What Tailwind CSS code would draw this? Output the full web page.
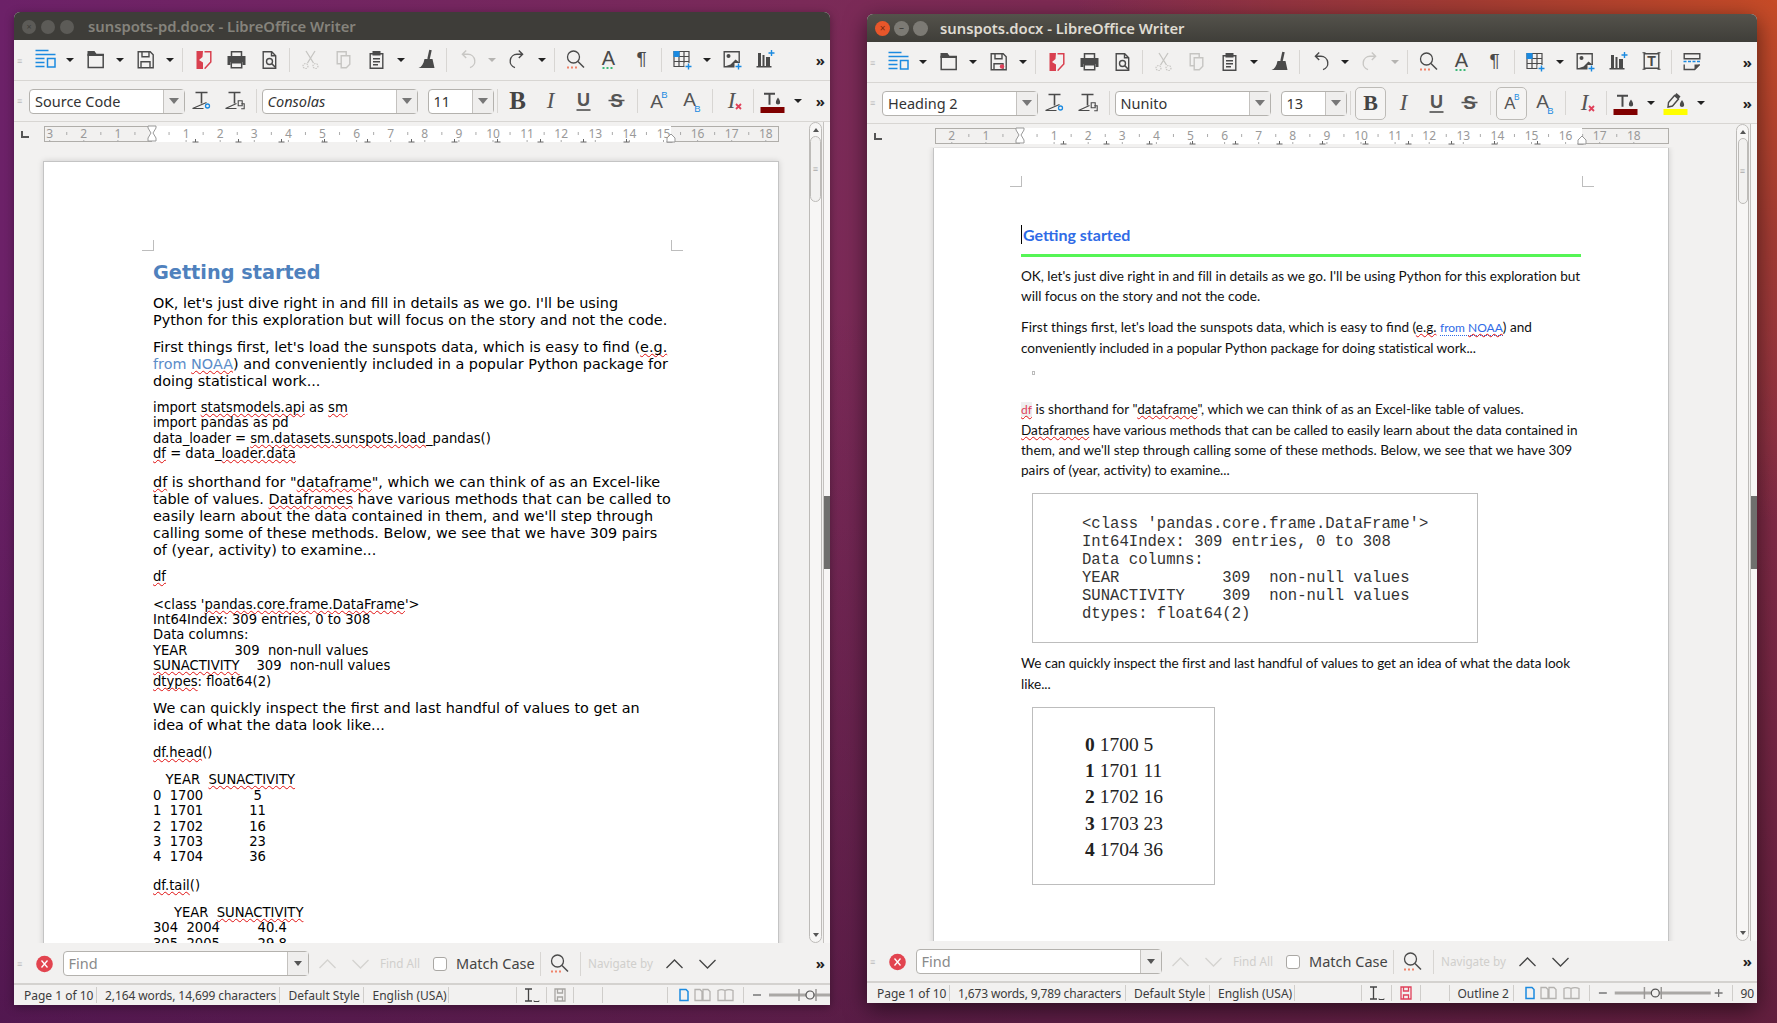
<!DOCTYPE html>
<html lang="en">
<head>
<meta charset="UTF-8" />
<title>LibreOffice Writer</title>
<script src="https://cdn.jsdelivr.net/npm/@tailwindcss/browser@4"></script>
</head>
<body class="w-[1777px] h-[1023px] overflow-hidden relative bg-[radial-gradient(ellipse_700px_520px_at_100%_0%,#c64b27_0%,#a23b33_45%,transparent_100%),linear-gradient(180deg,transparent_30%,rgba(50,12,50,0.45)_100%),linear-gradient(90deg,#6c2168_0%,#7a2a58_45%,#8a2e48_100%)] [font-family:'Noto_Sans',sans-serif]">

<svg class="hidden">
  <symbol id="sidebar" viewBox="-6.5 -3 33 26"><path d="M0 .5h13M0 4.500h20M0 8.500h9M0 12.500h9M0 16.500h9" fill="none" stroke="#1b8ae0" stroke-width="1.4"/><rect x="12" y="8.500" width="7.500" height="8.500" fill="none" stroke="#1b8ae0" stroke-width="1.5"/></symbol>
  <symbol id="folder" viewBox="-6.5 -3 33 26"><path d="M2.700 4.500h15v13h-15z" fill="none" stroke="#4a4a4a" stroke-width="1.5"/><path d="M2 1h7l2 3h7.500v2H2z" fill="#4a4a4a"/></symbol>
  <symbol id="save" viewBox="-6.5 -3 33 26"><path d="M2.700 1.700h12l3 3v13h-15zM6.500 1.700v5h7v-5M5.500 17.700v-6h9v6" fill="none" stroke="#4a4a4a" stroke-width="1.4"/></symbol>
  <symbol id="savemod" viewBox="-6.5 -3 33 26"><path d="M2.700 1.700h12l3 3v13h-15zM6.500 1.700v5h7v-5M5.500 17.700v-6h9v6" fill="none" stroke="#4a4a4a" stroke-width="1.4"/><circle cx="13.500" cy="14.500" r="2.200" fill="#e0405a"/></symbol>
  <symbol id="pdf" viewBox="-6.5 -3 33 26"><path d="M3 1h6.500L9 7l-3.500 3 4 2.500V19H3z" fill="#d9404f"/><path d="M11 1.700h6.300V12L11.500 18.300H11" fill="none" stroke="#d9404f" stroke-width="1.5"/></symbol>
  <symbol id="print" viewBox="-6.5 -3 33 26"><path d="M5 6V1.700h10V6" fill="none" stroke="#4a4a4a" stroke-width="1.5"/><path d="M1 6h18v9h-3v-3H4v3H1z" fill="#4a4a4a"/><path d="M4.800 12.700h10.400v5H4.800z" fill="none" stroke="#4a4a4a" stroke-width="1.5"/></symbol>
  <symbol id="preview" viewBox="-6.5 -3 33 26"><path d="M3.700 1.700h8.500l4 4v12.600H3.700zM12 1.700v4h4.200" fill="none" stroke="#4a4a4a" stroke-width="1.4"/><circle cx="10" cy="11.500" r="3" fill="none" stroke="#4a4a4a" stroke-width="1.4"/><path d="M12.300 13.800l3.500 3.500" stroke="#4a4a4a" stroke-width="1.600"/></symbol>
  <symbol id="cut" viewBox="-6.5 -3 33 26"><path d="M5.500 1l7.500 12M14.500 1L7 13" fill="none" stroke="#c6c5c2" stroke-width="1.3"/><circle cx="5" cy="16" r="2.500" fill="none" stroke="#c6c5c2" stroke-width="1.2" stroke-dasharray="1.500 1"/><circle cx="15" cy="16" r="2.500" fill="none" stroke="#c6c5c2" stroke-width="1.2" stroke-dasharray="1.500 1"/></symbol>
  <symbol id="copy" viewBox="-6.5 -3 33 26"><path d="M3.700 1.700h9v12h-9z" fill="none" stroke="#c6c5c2" stroke-width="1.4"/><path d="M7.700 5.700h8.600v8.500l-3.500 3.500H7.700z" fill="#f2f1f0" stroke="#c6c5c2" stroke-width="1.4"/></symbol>
  <symbol id="paste" viewBox="-6.5 -3 33 26"><path d="M3.700 3.700h12.600v14.600H3.700zM6.500 8.700h7M6.500 11.700h7M6.500 14.700h5" fill="none" stroke="#4a4a4a" stroke-width="1.400"/><rect x="6" y="1" width="8" height="4.500" fill="#4a4a4a"/></symbol>
  <symbol id="brush" viewBox="-6.5 -3 33 26"><path d="M14 0l-2 9" stroke="#4a4a4a" stroke-width="2.500"/><path d="M8 9h8l2 9H2c3-1 5-4 6-9z" fill="#4a4a4a"/></symbol>
  <symbol id="redo" viewBox="-6.5 -3 33 26"><path d="M14.500 4.300H9.500a6.800 6.800 0 0 0-2 13.300M11.300 .5l3.800 3.800-3.800 3.800" fill="none" stroke="currentColor" stroke-width="1.400"/></symbol>
  <symbol id="undo" viewBox="-6.5 -3 33 26"><path d="M5.500 4.300h5a6.800 6.800 0 0 1 2 13.300M8.700 .5L4.900 4.300l3.800 3.800" fill="none" stroke="currentColor" stroke-width="1.400"/></symbol>
  <symbol id="find" viewBox="-6.5 -3 33 26"><circle cx="8" cy="7" r="6" fill="none" stroke="#4a4a4a" stroke-width="1.300"/><path d="M12.500 11.500l6 6" stroke="#4a4a4a" stroke-width="1.500"/><path d="M1.500 17.500h10" stroke="#f0846a" stroke-width="2" stroke-dasharray="2 2"/></symbol>
  <symbol id="fmt" viewBox="-6.5 -3 33 26"><text x="10" y="14.500" text-anchor="middle" font-family="Liberation Sans" font-size="20" fill="#4a4a4a">A</text><path d="M4 18h12" stroke="#3cb878" stroke-width="2" stroke-dasharray="2 2"/></symbol>
  <symbol id="para" viewBox="-6.5 -3 33 26"><text x="10" y="15" text-anchor="middle" font-family="Liberation Sans" font-size="19" fill="#4a4a4a">¶</text></symbol>
  <symbol id="table" viewBox="-6.5 -3 33 26"><path d="M1.500 1.500h15v15h-15zM1.500 6.500h15M1.500 11.500h15M6.500 1.500v15M11.500 1.500v15" fill="none" stroke="#4a4a4a" stroke-width="1.200"/><rect x="1" y="1" width="6" height="6" fill="#1b8ae0"/><rect x="12" y="13" width="8" height="7" fill="#f2f1f0"/><path d="M16 13.500v6M13 16.500h6" stroke="#1b8ae0" stroke-width="1.400"/></symbol>
  <symbol id="image" viewBox="-6.5 -3 33 26"><path d="M1.700 1.700h15v15h-15z" fill="none" stroke="#4a4a4a" stroke-width="1.400"/><circle cx="6" cy="6" r="2" fill="#4a4a4a"/><path d="M2 16.500l6-2 5-5 4 3v4.500z" fill="#4a4a4a"/><rect x="12" y="13" width="8" height="7" fill="#f2f1f0"/><path d="M16 13.500v6M13 16.500h6" stroke="#1b8ae0" stroke-width="1.400"/></symbol>
  <symbol id="chart" viewBox="-6.5 -3 33 26"><path d="M1 16.700h15" stroke="#4a4a4a" stroke-width="1.400"/><rect x="2.500" y="3" width="3" height="13" fill="#4a4a4a"/><rect x="7" y="5" width="2" height="11" fill="#4a4a4a"/><rect x="10.500" y="7" width="4" height="9" fill="#4a4a4a"/><path d="M16 0v6M13 3h6" stroke="#1b8ae0" stroke-width="1.400"/></symbol>
  <symbol id="textbox" viewBox="-6.5 -3 33 26"><path d="M2.700 1.700h14.600v14.600H2.700z" fill="none" stroke="#4a4a4a" stroke-width="1.400"/><path d="M1 .7h3M16 .7h3M1 17.300h3M16 17.300h3" stroke="#4a4a4a"/><text x="10" y="14" text-anchor="middle" font-family="Liberation Sans" font-weight="700" font-size="14" fill="#4a4a4a">T</text></symbol>
  <symbol id="header" viewBox="-6.5 -3 33 26"><path d="M1.700 1.700h15.600v5H1.700zM1.700 12.500v5h10.500l5-5" fill="none" stroke="#4a4a4a" stroke-width="1.400"/><path d="M1 9.500h17" stroke="#1b8ae0" stroke-width="1.400" stroke-dasharray="3 1.500"/><path d="M12 17.500v-5h5z" fill="#4a4a4a"/></symbol>
  <symbol id="cs1" viewBox="-6.5 -3 33 26"><path d="M3 1.500h12M9 1.500v11" stroke="#4a4a4a" stroke-width="1.600"/><path d="M0 17.500h11M0 17.500l14-6" stroke="#4a4a4a" stroke-width="1.200" fill="none"/><circle cx="15" cy="15" r="2" fill="none" stroke="#1b8ae0" stroke-width="1.300"/></symbol>
  <symbol id="cs2" viewBox="-6.5 -3 33 26"><path d="M3 1.500h12M9 1.500v11" stroke="#4a4a4a" stroke-width="1.600"/><path d="M0 17.500h11M0 17.500l11-5" stroke="#4a4a4a" stroke-width="1.200" fill="none"/><path d="M12.700 9.700h4v5h-4zM15.700 12.700h3v5h-3" fill="#f2f1f0" stroke="#4a4a4a" stroke-width="1.100"/></symbol>
  <symbol id="bold" viewBox="-6.5 -3 33 26"><text x="10" y="18" text-anchor="middle" font-family="Liberation Serif" font-weight="700" font-size="25" fill="#444">B</text></symbol>
  <symbol id="ital" viewBox="-6.5 -3 33 26"><text x="10" y="17" text-anchor="middle" font-family="Liberation Serif" font-style="italic" font-size="23" fill="#555">I</text></symbol>
  <symbol id="under" viewBox="-6.5 -3 33 26"><text x="10" y="15" text-anchor="middle" font-family="Liberation Sans" font-weight="700" font-size="18" fill="#555">U</text><path d="M3 19h14" stroke="#444" stroke-width="1.300"/></symbol>
  <symbol id="strike" viewBox="-6.5 -3 33 26"><text x="10" y="16" text-anchor="middle" font-family="Liberation Sans" font-weight="700" font-size="19" fill="#555">S</text><path d="M2 9.500h16" stroke="#555" stroke-width="1.300"/></symbol>
  <symbol id="sup" viewBox="-6.5 -3 33 26"><text x="8" y="17" text-anchor="middle" font-family="Liberation Sans" font-size="19" fill="#555">A</text><text x="16" y="7" text-anchor="middle" font-family="Liberation Sans" font-size="9.500" fill="#1b8ae0">B</text></symbol>
  <symbol id="sub" viewBox="-6.5 -3 33 26"><text x="8" y="15" text-anchor="middle" font-family="Liberation Sans" font-size="19" fill="#555">A</text><text x="16" y="21" text-anchor="middle" font-family="Liberation Sans" font-size="9.500" fill="#1b8ae0">B</text></symbol>
  <symbol id="clear" viewBox="-6.5 -3 33 26"><text x="8" y="17" text-anchor="middle" font-family="Liberation Serif" font-style="italic" font-size="23" fill="#555">I</text><path d="M12.500 13l5 5M17.500 13l-5 5" stroke="#e0405a" stroke-width="1.800"/></symbol>
  <symbol id="fcolor" viewBox="-6.5 -3 33 26"><path d="M1.500 2.700h11M7 2.700v11" stroke="#4a4a4a" stroke-width="2"/><path d="M15.500 6.500c-3 4-2.700 7 0 7s3-3 0-7z" fill="#4a4a4a"/><rect x="-2" y="16" width="24" height="6" fill="#800000"/></symbol>
  <symbol id="hilite" viewBox="-6.5 -3 33 26"><path d="M3 9.500l6-7 4 3.500-6 7-4.500 1z" fill="none" stroke="#4a4a4a" stroke-width="1.400"/><path d="M9 2.500l4 3.500 2-2.500-4-3.500z" fill="#4a4a4a"/><path d="M16.500 7c-3 4-2.700 7 0 7s3-3 0-7z" fill="#4a4a4a"/><rect x="-2" y="16" width="24" height="6" fill="#ffff00"/></symbol>
  <symbol id="close" viewBox="-6.5 -3 33 26"><circle cx="10" cy="10" r="8.300" fill="#e2444f"/><path d="M7 6.500l6 7M13 6.500l-6 7" stroke="#fff" stroke-width="1.300"/></symbol>
  <symbol id="up" viewBox="-6.5 -3 33 26"><path d="M2 14l8-8 8 8" fill="none" stroke="currentColor" stroke-width="1.300"/></symbol>
  <symbol id="down" viewBox="-6.5 -3 33 26"><path d="M2 6l8 8 8-8" fill="none" stroke="currentColor" stroke-width="1.300"/></symbol>
  <symbol id="cursor" viewBox="0 0 24 16"><path d="M5 2h7M8.500 2v12M5 14h7" fill="none" stroke="#444" stroke-width="1.300"/><path d="M14 13.500v1h5v-1" fill="none" stroke="#444"/></symbol>
  <symbol id="floppy" viewBox="0 0 16 16"><path d="M3 2h10v12H3zM5.500 2v4h5V2M5.500 14v-4h5v4" fill="none" stroke="currentColor" stroke-width="1.300"/></symbol>
  <symbol id="pages" viewBox="0 0 66 16"><path d="M7 2.500h6l2 2v9H7z" fill="none" stroke="#1b8ae0" stroke-width="1.500"/><path d="M22 2.500h5l2 2v9h-7zM30 2.500h5l2 2v9h-7z" fill="none" stroke="#b4b2af" stroke-width="1.300"/><path d="M45 3.500c2-1 5-1 7 0 2-1 6-1 8 0v10H45zM52 3.500v10" fill="none" stroke="#b4b2af" stroke-width="1.300"/></symbol>
  <symbol id="zoom" viewBox="0 0 143 16"><path d="M9 8h8M126 8h8M130 4v8" fill="none" stroke="#777" stroke-width="1.300"/><path d="M25 8h97" stroke="#aaa8a5" stroke-width="3"/><path d="M55 2v12M72 2v12" stroke="#9a9896" stroke-width="1.500"/><circle cx="66" cy="8" r="4" fill="#f2f1f0" stroke="#555" stroke-width="1.200"/></symbol>
</svg>

<!-- left window -->
<div class="absolute left-[14px] top-[12px] w-[816px] h-[993px] flex flex-col rounded-t-[6px] overflow-hidden bg-[#f2f1f0] shadow-[0_2px_10px_rgba(0,0,0,0.35)]">
  <div class="h-[28px] shrink-0 flex items-center bg-[#3e3d39] pl-[8px] pt-px">
    <span class="w-[14px] h-[14px] rounded-full bg-[#5c5b57] text-[9px] leading-[14px] text-center text-[#3e3d39]">×</span>
    <span class="w-[14px] h-[14px] ml-[5px] rounded-full bg-[#5c5b57]"></span>
    <span class="w-[14px] h-[14px] ml-[5px] rounded-full bg-[#5c5b57]"></span>
    <span class="ml-[14px] text-[14.800px] font-semibold text-[#85837c] whitespace-nowrap">sunspots-pd.docx - LibreOffice Writer</span>
  </div>
  <div class="h-[41px] shrink-0 flex items-center border-b border-[#d8d6d3] text-[#4a4a4a] [&>svg]:w-[33px] [&>svg]:h-[26px] [&>svg]:shrink-0 [&>i]:mx-[4.500px] [&>i]:border-x-[4px] [&>i]:border-x-transparent [&>i]:border-t-[4px] [&>i]:border-t-[#222] [&>b]:w-px [&>b]:h-[24px] [&>b]:mx-[3.500px] [&>b]:bg-[#d8d6d3]">
    <span class="w-[14.500px] pl-[3px] text-[#bbb] text-[9px] leading-[5px]">≡</span>
    <svg><use href="#sidebar"/></svg><i></i><svg><use href="#folder"/></svg><i></i><svg><use href="#save"/></svg><i></i><b></b>
    <svg><use href="#pdf"/></svg><svg><use href="#print"/></svg><svg><use href="#preview"/></svg><b></b>
    <svg><use href="#cut"/></svg><svg><use href="#copy"/></svg><svg><use href="#paste"/></svg><i></i><svg><use href="#brush"/></svg><b></b>
    <svg class="text-[#c8c7c4]"><use href="#undo"/></svg><i class="border-t-[#b5b4b1]!"></i><svg><use href="#redo"/></svg><i></i><b></b>
    <svg><use href="#find"/></svg><svg><use href="#fmt"/></svg><svg><use href="#para"/></svg><b></b>
    <svg><use href="#table"/></svg><i></i><svg><use href="#image"/></svg><svg><use href="#chart"/></svg>
    <span class="ml-auto mr-[5px] text-[15px] font-bold text-[#222]">»</span>
  </div>
  <div class="h-[41px] shrink-0 flex items-center border-b border-[#d8d6d3] text-[#4a4a4a] [&>svg]:w-[33px] [&>svg]:h-[26px] [&>svg]:shrink-0 [&>i]:mx-[4.500px] [&>i]:border-x-[4px] [&>i]:border-x-transparent [&>i]:border-t-[4px] [&>i]:border-t-[#222] [&>b]:w-px [&>b]:h-[24px] [&>b]:mx-[3.500px] [&>b]:bg-[#d8d6d3]">
    <span class="w-[15px] pl-[3px] text-[#bbb] text-[9px]">≡</span>
    <div class="w-[156px] h-[25px] shrink-0 flex rounded-[4px] border border-[#b4b2ae] bg-white text-[14.500px] leading-[23px] text-[#333]"><span class="flex-1 pl-[5px]">Source Code</span><span class="w-[21px] border-l border-[#c4c2bf] bg-[#efeeed] flex items-center justify-center"><span class="border-x-[5px] border-x-transparent border-t-[6px] border-t-[#777]"></span></span></div>
    <span class="w-[1px]"></span>
    <svg><use href="#cs1"/></svg><svg><use href="#cs2"/></svg><b></b>
    <div class="ml-[1.500px] w-[156px] h-[25px] shrink-0 flex rounded-[4px] border border-[#b4b2ae] bg-white text-[14.500px] leading-[23px] text-[#333] italic"><span class="flex-1 pl-[5px]">Consolas</span><span class="w-[21px] border-l border-[#c4c2bf] bg-[#efeeed] flex items-center justify-center"><span class="border-x-[5px] border-x-transparent border-t-[6px] border-t-[#777]"></span></span></div>
    <div class="ml-[10px] w-[66px] h-[25px] shrink-0 flex rounded-[4px] border border-[#b4b2ae] bg-white text-[14.500px] leading-[23px] text-[#333]"><span class="flex-1 pl-[5px]">11</span><span class="w-[21px] border-l border-[#c4c2bf] bg-[#efeeed] flex items-center justify-center"><span class="border-x-[5px] border-x-transparent border-t-[6px] border-t-[#777]"></span></span></div>
    <b class="ml-[3.500px]! mr-[3px]!"></b>
    <svg><use href="#bold"/></svg><svg><use href="#ital"/></svg><svg><use href="#under"/></svg><svg><use href="#strike"/></svg><b class="mx-[4px]!"></b>
    <svg><use href="#sup"/></svg><svg><use href="#sub"/></svg><b class="mx-[4px]!"></b>
    <svg><use href="#clear"/></svg><b class="mx-[2.500px]!"></b>
    <svg><use href="#fcolor"/></svg><i></i>
    <span class="ml-auto mr-[5px] text-[15px] font-bold text-[#222]">»</span>
  </div>
  <div class="flex-1 min-h-0 flex">
    <div class="flex-1 min-w-0 flex flex-col">
      <svg id="rulerL" class="h-[23px] w-full shrink-0"></svg>
      <div class="flex-1 min-h-0 overflow-hidden pt-[16px] pl-[29px]">
        <div class="relative w-[736px] h-[900px] bg-white border border-[#c4c4c4] shadow-[0_0_6px_rgba(0,0,0,0.15)] pl-[109px] pt-[98px] text-black [font-family:'DejaVu_Sans',sans-serif] text-[14.400px] leading-[17px] whitespace-nowrap [&_u]:decoration-wavy [&_u]:decoration-[#e01010] [&_u]:decoration-1 [&_u]:underline-offset-[1px] [&_u]:[text-decoration-skip-ink:none] [&>p]:mt-[10px] [&>pre]:mt-[10.500px] [&>pre+p]:mt-[13px] [&>pre]:[font-family:'DejaVu_Sans',sans-serif] [&>pre]:text-[13.170px] [&>pre]:leading-[15.400px]">
          <span class="absolute left-[98px] top-[78px] w-[12px] h-[11px] border-r border-b border-[#bdbdbd]"></span>
          <span class="absolute left-[627px] top-[78px] w-[12px] h-[11px] border-l border-b border-[#bdbdbd]"></span>
          <h2 class="text-[19.300px] leading-[26px] font-bold text-[#4f81bd]">Getting started</h2>
          <p class="mt-[8.500px]!">OK, let's just dive right in and fill in details as we go. I'll be using<br>Python for this exploration but will focus on the story and not the code.</p>
          <p>First things first, let's load the sunspots data, which is easy to find (<u>e.g.</u><br><span class="text-[#5b8cc8]">from <u>NOAA</u></span>) and conveniently included in a popular Python package for<br>doing statistical work...</p>
          <pre>import <u>statsmodels.api</u> as <u>sm</u>
import pandas as pd
data_loader = <u>sm.datasets.sunspots.load</u>_pandas()
<u>df</u> = data_<u>loader.data</u></pre>
          <p class="mt-[12.500px]!"><u>df</u> is shorthand for "<u>dataframe</u>", which we can think of as an Excel-like<br>table of values. <u>Dataframes</u> have various methods that can be called to<br>easily learn about the data contained in them, and we'll step through<br>calling some of these methods. Below, we see that we have 309 pairs<br>of (year, activity) to examine...</p>
          <pre class="mt-[9.500px]!"><u>df</u></pre>
          <pre class="mt-[12.500px]!">&lt;class '<u>pandas.core.frame.DataFrame</u>'&gt;
Int64Index: 309 entries, 0 to 308
Data columns:
YEAR           <span class="ml-[1px]">309</span>  non-null values
<u>SUNACTIVITY</u>    309  non-null values
<u>dtypes</u>: float64(2)</pre>
          <p class="mt-[11px]!">We can quickly inspect the first and last handful of values to get an<br>idea of what the data look like...</p>
          <pre class="mt-[11.500px]!"><u>df.head</u>()</pre>
          <pre class="mt-[11.500px]!">   YEAR  <u>SUNACTIVITY</u>
0  1700            5
1  1701           11
2  1702           16
3  1703           23
4  1704           36</pre>
          <pre class="mt-[13px]!"><u>df.tail</u>()</pre>
          <pre class="mt-[11.500px]!">     YEAR  <u>SUNACTIVITY</u>
304  2004         40.4
305  2005         29.8</pre>
        </div>
      </div>
    </div>
    <div class="w-[15px] shrink-0 pl-px pr-px"><div class="h-full rounded-full border border-[#bdbbb8] bg-[#f7f6f5] flex flex-col items-center pt-[5px] pb-[5px]"><span class="border-x-[3px] border-x-transparent border-b-[4px] border-b-[#555]"></span><span class="mt-[4px] w-[11px] h-[66px] rounded-full border border-[#bdbbb8] bg-[#f2f1f0] flex items-center justify-center text-[#aaa] text-[9px]">≡</span><span class="mt-auto border-x-[3px] border-x-transparent border-t-[4px] border-t-[#555]"></span></div></div>
    <div class="w-[7px] shrink-0 border-l border-[#c4c2bf] bg-[#f7f6f5] flex items-center"><span class="w-full h-[73px] bg-[#6f6f6d]"></span></div>
  </div>
  <div class="h-[40px] shrink-0 flex items-center border-t border-[#f2f1f0] text-[14.500px] text-[#555] [&>svg]:w-[33px] [&>svg]:h-[26px] [&>svg]:shrink-0">
    <span class="w-[13.500px] pl-[3px] text-[#bbb] text-[9px]">≡</span>
    <svg><use href="#close"/></svg>
    <div class="ml-[2px] w-[246.500px] h-[25px] shrink-0 flex rounded-[4px] border border-[#b4b2ae] bg-white leading-[23px] text-[#8a8a8a]"><span class="flex-1 pl-[5px]">Find</span><span class="w-[21px] border-l border-[#c4c2bf] bg-[#efeeed] flex items-center justify-center"><span class="border-x-[4px] border-x-transparent border-t-[5px] border-t-[#555]"></span></span></div>
    <svg class="ml-[1.500px] text-[#d4d3d0]"><use href="#up"/></svg><svg class="text-[#d4d3d0]"><use href="#down"/></svg>
    <span class="w-[41px] ml-[3.500px] text-[11.700px] text-[#d0cfcc] whitespace-nowrap">Find All</span>
    <span class="ml-[12px] w-[14px] h-[14px] shrink-0 rounded-[3px] border border-[#aaa8a4] bg-white"></span>
    <span class="ml-[9px] w-[77px] text-[#444] whitespace-nowrap">Match Case</span>
    <span class="ml-[7px] w-px h-[24px] bg-[#d8d6d3]"></span>
    <svg class="ml-[2px]"><use href="#find"/></svg>
    <span class="ml-[4px] w-px h-[24px] bg-[#d8d6d3]"></span>
    <span class="ml-[7px] w-[62px] text-[11.700px] text-[#d0cfcc] whitespace-nowrap">Navigate by</span>
    <svg class="ml-[7.500px] text-[#444]"><use href="#up"/></svg><svg class="text-[#444]"><use href="#down"/></svg>
    <span class="ml-auto mr-[5px] text-[15px] font-bold text-[#222]">»</span>
  </div>
  <div class="h-[22px] shrink-0 flex items-center border-t-2 border-[#d4d2cf] overflow-hidden text-[12px] text-[#3c3c3c] [&>span]:h-[16px] [&>span]:shrink-0 [&>span]:flex [&>span]:items-center [&>span]:whitespace-nowrap [&>span]:border-r [&>span]:border-[#cfcdca]">
    <span class="w-[82.500px] pl-[10px] pt-px">Page 1 of 10</span>
    <span class="w-[183.500px] pl-[8.500px] pt-px tracking-[-0.1px]">2,164 words, 14,699 characters</span>
    <span class="w-[84px] pl-[8.500px] pt-px">Default Style</span>
    <span class="w-[85px] pl-[8.500px] pt-px">English (USA)</span>
    <span class="w-[68px]"></span>
    <span class="w-[30px] justify-center"><svg class="w-[24px] h-[16px]"><use href="#cursor"/></svg></span>
    <span class="w-[27px] justify-center text-[#a8a6a3]"><svg class="w-[16px] h-[16px]"><use href="#floppy"/></svg></span>
    <span class="w-[29px]"></span>
    <span class="w-[64.500px]"></span>
    <span class="w-[76.500px] pl-[5px]"><svg class="w-[66px] h-[16px]"><use href="#pages"/></svg></span>
    <span class="w-[143px] border-r-0!"><svg class="w-[143px] h-[16px]"><use href="#zoom"/></svg></span>
  </div>
</div>

<!-- right window -->
<div class="absolute left-[867px] top-[14px] w-[890px] h-[989px] flex flex-col rounded-t-[6px] overflow-hidden bg-[#f2f1f0] shadow-[0_6px_22px_rgba(0,0,0,0.55)]">
  <div class="h-[28px] shrink-0 flex items-center bg-[linear-gradient(180deg,#54524b,#3f3e39)] pl-[8px] pt-px">
    <span class="w-[15px] h-[15px] rounded-full bg-[#e8562a] text-[10px] leading-[15px] text-center text-[#7a2a10]">×</span>
    <span class="w-[15px] h-[15px] ml-[4px] rounded-full bg-[#7c7a74] text-[10px] leading-[13px] text-center text-[#3e3d39]">–</span>
    <span class="w-[15px] h-[15px] ml-[4px] rounded-full bg-[#7c7a74]"></span>
    <span class="ml-[12px] text-[14.800px] font-semibold text-[#dfdbd2] whitespace-nowrap">sunspots.docx - LibreOffice Writer</span>
  </div>
  <div class="h-[41px] shrink-0 flex items-center border-b border-[#d8d6d3] text-[#4a4a4a] [&>svg]:w-[33px] [&>svg]:h-[26px] [&>svg]:shrink-0 [&>i]:mx-[4.500px] [&>i]:border-x-[4px] [&>i]:border-x-transparent [&>i]:border-t-[4px] [&>i]:border-t-[#222] [&>b]:w-px [&>b]:h-[24px] [&>b]:mx-[3.500px] [&>b]:bg-[#d8d6d3]">
    <span class="w-[14.500px] pl-[3px] text-[#bbb] text-[9px] leading-[5px]">≡</span>
    <svg><use href="#sidebar"/></svg><i></i><svg><use href="#folder"/></svg><i></i><svg><use href="#savemod"/></svg><i></i><b></b>
    <svg><use href="#pdf"/></svg><svg><use href="#print"/></svg><svg><use href="#preview"/></svg><b></b>
    <svg><use href="#cut"/></svg><svg><use href="#copy"/></svg><svg><use href="#paste"/></svg><i></i><svg><use href="#brush"/></svg><b></b>
    <svg><use href="#undo"/></svg><i></i><svg class="text-[#c8c7c4]"><use href="#redo"/></svg><i class="border-t-[#b5b4b1]!"></i><b></b>
    <svg><use href="#find"/></svg><svg><use href="#fmt"/></svg><svg><use href="#para"/></svg><b></b>
    <svg><use href="#table"/></svg><i></i><svg><use href="#image"/></svg><svg><use href="#chart"/></svg><svg><use href="#textbox"/></svg><b></b>
    <svg><use href="#header"/></svg>
    <span class="ml-auto mr-[5px] text-[15px] font-bold text-[#222]">»</span>
  </div>
  <div class="h-[41px] shrink-0 flex items-center border-b border-[#d8d6d3] text-[#4a4a4a] [&>svg]:w-[33px] [&>svg]:h-[26px] [&>svg]:shrink-0 [&>i]:mx-[4.500px] [&>i]:border-x-[4px] [&>i]:border-x-transparent [&>i]:border-t-[4px] [&>i]:border-t-[#222] [&>b]:w-px [&>b]:h-[24px] [&>b]:mx-[3.500px] [&>b]:bg-[#d8d6d3]">
    <span class="w-[15px] pl-[3px] text-[#bbb] text-[9px]">≡</span>
    <div class="w-[156px] h-[25px] shrink-0 flex rounded-[4px] border border-[#b4b2ae] bg-white text-[14.500px] leading-[23px] text-[#333]"><span class="flex-1 pl-[5px]">Heading 2</span><span class="w-[21px] border-l border-[#c4c2bf] bg-[#efeeed] flex items-center justify-center"><span class="border-x-[5px] border-x-transparent border-t-[6px] border-t-[#777]"></span></span></div>
    <span class="w-[1px]"></span>
    <svg><use href="#cs1"/></svg><svg><use href="#cs2"/></svg><b></b>
    <div class="ml-[1.500px] w-[156px] h-[25px] shrink-0 flex rounded-[4px] border border-[#b4b2ae] bg-white text-[14.500px] leading-[23px] text-[#333]"><span class="flex-1 pl-[5px]">Nunito</span><span class="w-[21px] border-l border-[#c4c2bf] bg-[#efeeed] flex items-center justify-center"><span class="border-x-[5px] border-x-transparent border-t-[6px] border-t-[#777]"></span></span></div>
    <div class="ml-[10px] w-[66px] h-[25px] shrink-0 flex rounded-[4px] border border-[#b4b2ae] bg-white text-[14.500px] leading-[23px] text-[#333]"><span class="flex-1 pl-[5px]">13</span><span class="w-[21px] border-l border-[#c4c2bf] bg-[#efeeed] flex items-center justify-center"><span class="border-x-[5px] border-x-transparent border-t-[6px] border-t-[#777]"></span></span></div>
    <b class="ml-[3.500px]! mr-[3px]!"></b>
    <span class="w-[31px] h-[33px] mx-px shrink-0 rounded-[5px] border border-[#bdbbb7] bg-[#f5f4f3] flex items-center justify-center overflow-hidden"><svg class="w-[29px] h-[26px] shrink-0"><use href="#bold"/></svg></span>
    <svg><use href="#ital"/></svg><svg><use href="#under"/></svg><svg><use href="#strike"/></svg><b class="mx-[4px]!"></b>
    <span class="w-[31px] h-[33px] mx-px shrink-0 rounded-[5px] border border-[#bdbbb7] bg-[#f5f4f3] flex items-center justify-center overflow-hidden"><svg class="w-[29px] h-[26px] shrink-0"><use href="#sup"/></svg></span>
    <svg><use href="#sub"/></svg><b class="mx-[4px]!"></b>
    <svg><use href="#clear"/></svg><b class="mx-[2.500px]!"></b>
    <svg><use href="#fcolor"/></svg><i></i><svg><use href="#hilite"/></svg><i></i>
    <span class="ml-auto mr-[5px] text-[15px] font-bold text-[#222]">»</span>
  </div>
  <div class="flex-1 min-h-0 flex">
    <div class="flex-1 min-w-0 flex flex-col">
      <svg id="rulerR" class="h-[23px] w-full shrink-0"></svg>
      <div class="flex-1 min-h-0 overflow-hidden pt-px pl-[66px]">
        <div class="relative w-[736px] h-[900px] bg-white border-x border-[#c4c4c4] shadow-[0_0_6px_rgba(0,0,0,0.15)] pl-[87px] pr-[87px] pt-[77px] text-[#111] [font-family:'Lato',sans-serif] text-[13.600px] leading-[20px] whitespace-nowrap [&_u]:decoration-wavy [&_u]:decoration-[#e01010] [&_u]:decoration-1 [&_u]:underline-offset-[1px] [&_u]:[text-decoration-skip-ink:none]">
          <span class="absolute left-[76px] top-[28px] w-[12px] h-[11px] border-r border-b border-[#bdbdbd]"></span>
          <span class="absolute left-[648px] top-[28px] w-[12px] h-[11px] border-l border-b border-[#bdbdbd]"></span>
          <h2 class="h-[32px] border-b-[3px] border-[#55f555] text-[16px] leading-[20px] font-bold text-[#2f6be6]"><span class="border-l-[1.500px] border-black pl-px">Getting started</span></h2>
          <p class="mt-[9px]"><span class="tracking-[-0.04px]">OK, let's just dive right in and fill in details as we go. I'll be using Python for this exploration but</span><br>will focus on the story and not the code.</p>
          <p class="mt-[11px]">First things first, let's load the sunspots data, which is easy to find (<u>e.g.</u> <span class="text-[#2f6be6] text-[12px] border-b border-dotted border-[#2f6be6]">from <u>NOAA</u></span>) and<br><span class="tracking-[-0.08px]">conveniently included in a popular Python package for doing statistical work...</span></p>
          <div class="h-[41px] pl-[11px] pt-[13px]"><span class="block w-[3px] h-[4px] border border-[#bbb]"></span></div>
          <p><u class="text-[#e0405a] text-[12px] bg-[#efefef]">df</u> is shorthand for "<u>dataframe</u>", which we can think of as an Excel-like table of values.<br><span class="tracking-[-0.07px]"><u>Dataframes</u> have various methods that can be called to easily learn about the data contained in</span><br>them, and we'll step through calling some of these methods. Below, we see that we have 309<br>pairs of (year, activity) to examine...</p>
          <pre class="mt-[13px] ml-[11px] w-[446px] h-[150px] border border-[#bdbdbd] pl-[49px] pt-[21px] text-[15.600px] leading-[18px] text-[#333] [font-family:'Liberation_Mono',monospace]">&lt;class 'pandas.core.frame.DataFrame'&gt;
Int64Index: 309 entries, 0 to 308
Data columns:
YEAR           309  non-null values
SUNACTIVITY    309  non-null values
dtypes: float64(2)</pre>
          <p class="mt-[10px] leading-[21px]"><span class="tracking-[-0.07px]">We can quickly inspect the first and last handful of values to get an idea of what the data look</span><br>like...</p>
          <div class="mt-[12px] ml-[11px] w-[183px] h-[178px] border border-[#bdbdbd] pl-[52px] pt-[24px] [font-family:'Liberation_Serif',serif] text-[19.500px] leading-[26.200px] text-[#222]">
            <div><b>0</b> 1700 5</div>
            <div><b>1</b> 1701 11</div>
            <div><b>2</b> 1702 16</div>
            <div><b>3</b> 1703 23</div>
            <div><b>4</b> 1704 36</div>
          </div>
        </div>
      </div>
    </div>
    <div class="w-[14px] shrink-0 pr-px"><div class="h-full rounded-full border border-[#bdbbb8] bg-[#f7f6f5] flex flex-col items-center pt-[5px] pb-[5px]"><span class="border-x-[3px] border-x-transparent border-b-[4px] border-b-[#555]"></span><span class="mt-[4px] w-[10px] h-[66px] rounded-full border border-[#bdbbb8] bg-[#f2f1f0] flex items-center justify-center text-[#aaa] text-[9px]">≡</span><span class="mt-auto border-x-[3px] border-x-transparent border-t-[4px] border-t-[#555]"></span></div></div>
    <div class="w-[7px] shrink-0 border-l border-[#c4c2bf] bg-[#f7f6f5] flex items-center"><span class="w-full h-[73px] bg-[#6f6f6d]"></span></div>
  </div>
  <div class="h-[40px] shrink-0 flex items-center border-t border-[#f2f1f0] text-[14.500px] text-[#555] [&>svg]:w-[33px] [&>svg]:h-[26px] [&>svg]:shrink-0">
    <span class="w-[13.500px] pl-[3px] text-[#bbb] text-[9px]">≡</span>
    <svg><use href="#close"/></svg>
    <div class="ml-[2px] w-[246.500px] h-[25px] shrink-0 flex rounded-[4px] border border-[#b4b2ae] bg-white leading-[23px] text-[#8a8a8a]"><span class="flex-1 pl-[5px]">Find</span><span class="w-[21px] border-l border-[#c4c2bf] bg-[#efeeed] flex items-center justify-center"><span class="border-x-[4px] border-x-transparent border-t-[5px] border-t-[#555]"></span></span></div>
    <svg class="ml-[1.500px] text-[#d4d3d0]"><use href="#up"/></svg><svg class="text-[#d4d3d0]"><use href="#down"/></svg>
    <span class="w-[41px] ml-[3.500px] text-[11.700px] text-[#d0cfcc] whitespace-nowrap">Find All</span>
    <span class="ml-[12px] w-[14px] h-[14px] shrink-0 rounded-[3px] border border-[#aaa8a4] bg-white"></span>
    <span class="ml-[9px] w-[77px] text-[#444] whitespace-nowrap">Match Case</span>
    <span class="ml-[7px] w-px h-[24px] bg-[#d8d6d3]"></span>
    <svg class="ml-[2px]"><use href="#find"/></svg>
    <span class="ml-[4px] w-px h-[24px] bg-[#d8d6d3]"></span>
    <span class="ml-[7px] w-[62px] text-[11.700px] text-[#d0cfcc] whitespace-nowrap">Navigate by</span>
    <svg class="ml-[7.500px] text-[#444]"><use href="#up"/></svg><svg class="text-[#444]"><use href="#down"/></svg>
    <span class="ml-auto mr-[5px] text-[15px] font-bold text-[#222]">»</span>
  </div>
  <div class="h-[22px] shrink-0 flex items-center border-t-2 border-[#d4d2cf] overflow-hidden text-[12px] text-[#3c3c3c] [&>span]:h-[16px] [&>span]:shrink-0 [&>span]:flex [&>span]:items-center [&>span]:whitespace-nowrap [&>span]:border-r [&>span]:border-[#cfcdca]">
    <span class="w-[83px] pl-[10px] pt-px">Page 1 of 10</span>
    <span class="w-[176px] pl-[8px] pt-px tracking-[-0.15px]">1,673 words, 9,789 characters</span>
    <span class="w-[84px] pl-[8px] pt-px">Default Style</span>
    <span class="w-[84.500px] pl-[8px] pt-px">English (USA)</span>
    <span class="w-[67.500px]"></span>
    <span class="w-[30px] justify-center"><svg class="w-[24px] h-[16px]"><use href="#cursor"/></svg></span>
    <span class="w-[29px] justify-center text-[#e0405a]"><svg class="w-[16px] h-[16px]"><use href="#floppy"/></svg></span>
    <span class="w-[28.500px]"></span>
    <span class="w-[64.500px] pl-[8px] pt-px">Outline 2</span>
    <span class="w-[76px] pl-[5px]"><svg class="w-[66px] h-[16px]"><use href="#pages"/></svg></span>
    <span class="w-[142.500px]"><svg class="w-[142px] h-[16px]"><use href="#zoom"/></svg></span>
    <span class="pl-[8px] pt-px border-r-0!">90</span>
  </div>
</div>

<script>
  const NS = 'http://www.w3.org/2000/svg';

  function add(svg, tag, attrs, text) {
    const el = document.createElementNS(NS, tag);
    Object.entries(attrs).forEach(([k, v]) => el.setAttribute(k, v));
    if (text !== undefined) el.textContent = text;
    svg.appendChild(el);
  }

  // box: grey ruler ends, zero: left indent, end: right indent (window coordinates)
  function drawRuler(id, box, zero, end, below, above) {
    const svg = document.getElementById(id);
    const top = 4, h = 15;
    add(svg, 'path', { d: 'M8 9v6h7', fill: 'none', stroke: '#555', 'stroke-width': 2 });
    add(svg, 'rect', { x: box[0] + 0.5, y: top + 0.5, width: box[1] - box[0], height: h, fill: '#f2f1f0', stroke: '#b0aeaa' });
    add(svg, 'rect', { x: zero, y: top, width: end - zero, height: h + 1, fill: '#fff' });
    const step = 34.1;
    for (let n = -below; n <= above; n++) {
      const x = zero + n * step;
      if (n !== 0) {
        add(svg, 'text', { x, y: top + 12, 'text-anchor': 'middle', 'font-size': 12, 'font-family': 'Noto Sans', fill: '#999' }, Math.abs(n));
        add(svg, 'path', { d: `M${x} ${top + h - 1}v2`, stroke: '#aaa' });
      }
      if (n < above) add(svg, 'path', { d: `M${x + step / 2} ${top + 6}v3`, stroke: '#aaa' });
    }
    for (let x = zero + 43; x < end; x += 43.1) {
      const px = Math.round(x) + 0.5;
      add(svg, 'path', { d: `M${px} ${top + h - 2}v3m-3 0h6`, fill: 'none', stroke: '#666' });
    }
    add(svg, 'path', { d: `M${zero - 4} ${top}h8v2l-3 5 3 5v3h-8v-3l3-5-3-5z`, fill: '#fff', stroke: '#999' });
    add(svg, 'path', { d: `M${end - 4} ${top + h + 1}v-4l4-4 4 4v4z`, fill: '#fff', stroke: '#999' });
  }

  drawRuler('rulerL', [30, 764], 138, 657, 3, 18);
  drawRuler('rulerR', [68, 801], 153, 715, 2, 18);
</script>
</body>
</html>
